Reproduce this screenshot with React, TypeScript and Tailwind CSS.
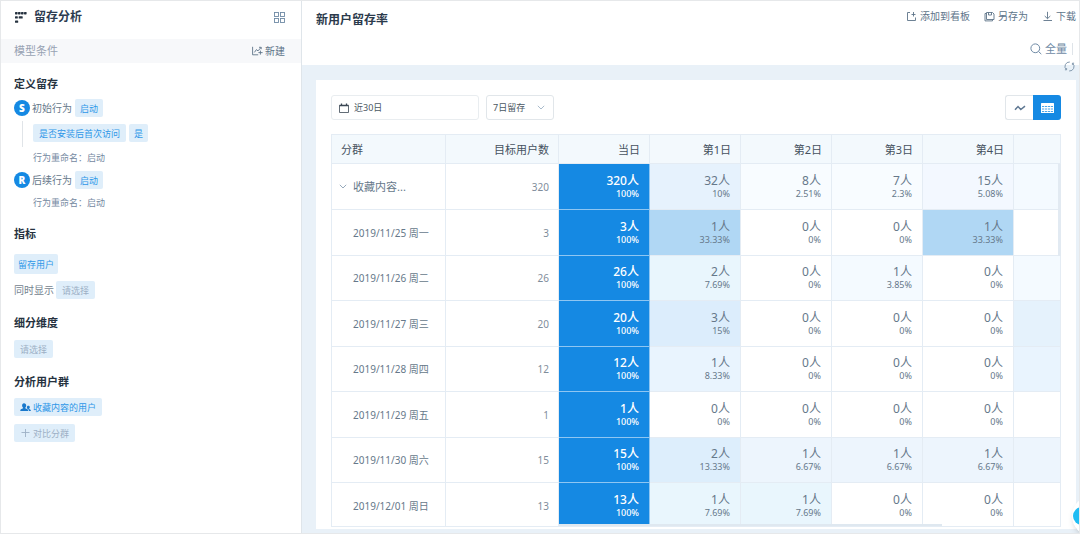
import { useState } from 'react'
import clsx from 'clsx'

const DAYS = ['第1日', '第2日', '第3日', '第4日']

interface Cell {
  n: number
  rate: string
  bg: string
}

interface Row {
  label: string
  total: number
  cells: Cell[]
  next: string
}

const ZERO: Cell = { n: 0, rate: '0%', bg: 'bg-white' }

const ROWS: Row[] = [
  {
    label: '收藏内容...',
    total: 320,
    cells: [
      { n: 32, rate: '10%', bg: 'bg-[#e6f2fd]' },
      { n: 8, rate: '2.51%', bg: 'bg-[#f8fcff]' },
      { n: 7, rate: '2.3%', bg: 'bg-[#f8fcff]' },
      { n: 15, rate: '5.08%', bg: 'bg-[#f3f8ff]' },
    ],
    next: 'bg-[#f4faff]',
  },
  {
    label: '2019/11/25 周一',
    total: 3,
    cells: [
      { n: 1, rate: '33.33%', bg: 'bg-[#b0d7f4]' },
      ZERO,
      ZERO,
      { n: 1, rate: '33.33%', bg: 'bg-[#b0d7f4]' },
    ],
    next: 'bg-white',
  },
  {
    label: '2019/11/26 周二',
    total: 26,
    cells: [
      { n: 2, rate: '7.69%', bg: 'bg-[#e9f6fd]' },
      ZERO,
      { n: 1, rate: '3.85%', bg: 'bg-[#f4faff]' },
      ZERO,
    ],
    next: 'bg-[#f4faff]',
  },
  {
    label: '2019/11/27 周三',
    total: 20,
    cells: [{ n: 3, rate: '15%', bg: 'bg-[#dcedfc]' }, ZERO, ZERO, ZERO],
    next: 'bg-[#e5f2fc]',
  },
  {
    label: '2019/11/28 周四',
    total: 12,
    cells: [{ n: 1, rate: '8.33%', bg: 'bg-[#e9f4fe]' }, ZERO, ZERO, ZERO],
    next: 'bg-[#e9f4fe]',
  },
  {
    label: '2019/11/29 周五',
    total: 1,
    cells: [ZERO, ZERO, ZERO, ZERO],
    next: 'bg-white',
  },
  {
    label: '2019/11/30 周六',
    total: 15,
    cells: [
      { n: 2, rate: '13.33%', bg: 'bg-[#ddeefc]' },
      { n: 1, rate: '6.67%', bg: 'bg-[#edf5fd]' },
      { n: 1, rate: '6.67%', bg: 'bg-[#edf5fd]' },
      { n: 1, rate: '6.67%', bg: 'bg-[#edf5fd]' },
    ],
    next: 'bg-[#edf5fd]',
  },
  {
    label: '2019/12/01 周日',
    total: 13,
    cells: [
      { n: 1, rate: '7.69%', bg: 'bg-[#e9f6fd]' },
      { n: 1, rate: '7.69%', bg: 'bg-[#e9f6fd]' },
      ZERO,
      ZERO,
    ],
    next: 'bg-white',
  },
]

interface ChipProps {
  children: React.ReactNode
  muted?: boolean
  className?: string
}

function Chip({ children, muted, className = 'h-[18px] px-[5px]' }: ChipProps) {
  return (
    <button
      type="button"
      className={clsx(
        'flex items-center rounded-xs bg-[#dfeefa] text-[9px] leading-none whitespace-nowrap',
        muted ? 'text-[#9db0c5]' : 'text-[#2e97e8]',
        className,
      )}
    >
      {children}
    </button>
  )
}

function Heading({ children, className }: { children: React.ReactNode; className?: string }) {
  return (
    <h2 className={clsx('text-[11px] leading-[18px] font-bold text-[#26323f]', className)}>
      {children}
    </h2>
  )
}

function Badge({ children }: { children: string }) {
  return (
    <span className="flex size-4 items-center justify-center rounded-full bg-[#1589e3] font-['Open_Sans',sans-serif] text-[10px] leading-none font-extrabold text-white">
      {children}
    </span>
  )
}

function Chevron({ className }: { className?: string }) {
  return (
    <svg viewBox="0 0 8 5" className={className} fill="none" stroke="currentColor" strokeWidth="0.9">
      <path d="M0.8 0.8 4 4l3.2-3.2" />
    </svg>
  )
}

function Sidebar() {
  return (
    <aside className="flex w-[301px] shrink-0 flex-col border-r border-[#dfe5ea] bg-white">
      <div className="flex h-[38px] items-center justify-between pr-4 pb-[6px] pl-[14px]">
        <div className="flex items-center gap-[7px]">
          <svg viewBox="0 0 12 11" className="h-[11px] w-3" fill="#26323f">
            <rect x="0" y="0" width="2.6" height="2.4" rx="0.6" />
            <rect x="3" y="0" width="2.6" height="2.4" rx="0.6" />
            <rect x="6" y="0" width="2.6" height="2.4" rx="0.6" />
            <rect x="9" y="0" width="2.6" height="2.4" rx="0.6" />
            <rect x="0" y="4.2" width="2.8" height="2.4" rx="0.6" />
            <rect x="3.7" y="4.2" width="4" height="2.4" rx="0.6" />
            <rect x="0" y="8.4" width="3.2" height="2.4" rx="0.6" />
          </svg>
          <h1 className="text-xs font-bold text-[#2c3b50]">留存分析</h1>
        </div>
        <button type="button" aria-label="切换视图" className="text-[#6f8aa5]">
          <svg viewBox="0 0 11 11" className="size-[11px]" fill="none" stroke="currentColor" strokeWidth="0.9">
            <rect x="0.5" y="0.5" width="4" height="4" />
            <rect x="6.5" y="0.5" width="4" height="4" />
            <rect x="0.5" y="6.5" width="4" height="4" />
            <rect x="6.5" y="6.5" width="4" height="4" />
          </svg>
        </button>
      </div>

      <div className="flex h-6 items-center justify-between bg-[#f7f8fa] pr-4 pl-[13px]">
        <span className="text-[11px] text-[#98a2b3]">模型条件</span>
        <button type="button" className="flex items-center gap-[2px] text-[10px] text-[#5d7489]">
          <svg viewBox="0 0 11 10" className="h-[10px] w-[11px]" fill="none" stroke="currentColor" strokeWidth="0.9">
            <path d="M0.6 0.8v8h5.6M2.4 6.4l2-2.8 1.6 1.3 3-3.4M7 1.3h2.2v1.9M8.4 4.6v4M6.4 6.6h4.2" />
          </svg>
          新建
        </button>
      </div>

      <div className="flex flex-col items-start px-[13px] pt-3">
        <Heading>定义留存</Heading>
        <div className="mt-[6px] flex items-center">
          <Badge>S</Badge>
          <span className="mr-[3px] ml-[2px] text-[10px] text-[#66788a]">初始行为</span>
          <Chip>启动</Chip>
        </div>
        <div className="flex gap-[10px] pl-2">
          <div className="mt-1 h-[26px] w-px bg-[#e0e4e8]" />
          <div>
            <div className="mt-[7px] flex gap-[3px]">
              <Chip className="h-[18px] px-[6px]">是否安装后首次访问</Chip>
              <Chip>是</Chip>
            </div>
            <p className="mt-[7px] text-[9px] leading-[18px] text-[#74889f]">行为重命名：启动</p>
          </div>
        </div>
        <div className="mt-1 flex items-center">
          <Badge>R</Badge>
          <span className="mr-[3px] ml-[2px] text-[10px] text-[#66788a]">后续行为</span>
          <Chip>启动</Chip>
        </div>
        <p className="mt-[5px] ml-[19px] text-[9px] leading-[18px] text-[#74889f]">行为重命名：启动</p>

        <Heading className="mt-[13px]">指标</Heading>
        <Chip className="mt-[11px] h-5 px-1">留存用户</Chip>
        <div className="mt-[7px] flex items-center gap-[2px]">
          <span className="text-[10px] text-[#74838f]">同时显示</span>
          <Chip muted className="h-[18px] px-[6px]">请选择</Chip>
        </div>

        <Heading className="mt-[15px]">细分维度</Heading>
        <Chip muted className="mt-2 h-[18px] px-[6px]">请选择</Chip>

        <Heading className="mt-[15px]">分析用户群</Heading>
        <Chip className="mt-[7px] h-[18px] gap-[2px] px-[6px]">
          <svg viewBox="0 0 11 9" className="h-[9px] w-[11px]" fill="#1878cc">
            <path d="M4 0.300c1.500 0 2.200 1 2.200 2.300 0 1-.4 1.800-.9 2.200v.5l2.100.9c.5.200.7.600.7 1.200V8H0.300v-.6c0-.6.200-1 .700-1.200l2.100-.9v-.5c-.6-.4-1-1.200-1-2.200C2.100 1.300 2.600.3 4 .3z" />
            <path d="M8.300 2.800c1 0 1.500.6 1.500 1.400 0 .6-.3 1-.6 1.300v.4l1 .5c.4.200.6.500.6 1V8H8.800c0-1-.2-1.600-1-2l-.6-.3c.2-.3-.3-.9-.3-1.500 0-.8.5-1.400 1.400-1.400z" />
          </svg>
          收藏内容的用户
        </Chip>
        <Chip muted className="mt-2 h-[18px] gap-[3px] px-[6px]">
          <svg viewBox="0 0 10 10" className="size-[10px]" fill="none" stroke="currentColor" strokeWidth="0.9">
            <path d="M5.500 1v8M1.500 4.500h8" />
          </svg>
          对比分群
        </Chip>
      </div>
    </aside>
  )
}

function PageHeader() {
  const action = 'flex items-center gap-[3px] whitespace-nowrap'
  return (
    <header className="relative h-16 bg-white pr-[3px] pl-[14px] text-[#5d7489]">
      <div className="flex justify-between">
        <h1 className="pt-[9px] text-xs leading-[20px] font-bold text-[#2b3a4b]">新用户留存率</h1>
        <div className="flex h-[30px] items-center gap-[14px] text-[10px]">
          <button type="button" className={action}>
            <svg viewBox="0 0 11 11" className="size-[11px]" fill="none" stroke="currentColor" strokeWidth="0.9">
              <path d="M4 1.500H1.500v8h8V6.500M7.500 1v4.500M5.500 3.500h4" />
            </svg>
            添加到看板
          </button>
          <button type="button" className={action}>
            <svg viewBox="0 0 11 11" className="size-[11px]" fill="none" stroke="currentColor" strokeWidth="0.9">
              <path d="M2.500 1.500h6l1.500 1.500v5.500H2.500zM4.500 1.500v2.500h3V1.500M2.500 2.500H1v7.400h7.500V8.500" />
            </svg>
            另存为
          </button>
          <button type="button" className={action}>
            <svg viewBox="0 0 11 11" className="size-[11px]" fill="none" stroke="currentColor" strokeWidth="0.9">
              <path d="M5.500 0.800v6.800M2.700 5l2.800 2.700L8.300 5M1.500 9.500h8.500" />
            </svg>
            下载
          </button>
        </div>
      </div>
      <div className="mt-[8px] flex h-5 items-center justify-end gap-[5px] pr-[3px]">
        <button type="button" className="flex items-center gap-[3px] text-[11px] text-[#6f8aa5]">
          <svg viewBox="0 0 12 12" className="size-3" fill="none" stroke="currentColor">
            <circle cx="5.300" cy="5.300" r="4.400" />
            <path d="M8.500 8.500l2.800 2.600" />
          </svg>
          全量
        </button>
        <span className="h-3 w-px bg-[#dfe4e9]" />
      </div>
      <button type="button" aria-label="刷新" className="absolute right-1 -bottom-[7px] text-[#8399ae]">
        <svg viewBox="0 0 11 11" className="size-[11px]" fill="none" stroke="currentColor">
          <path d="M5.800 1A4.500 4.500 0 0 0 2.300 8.700M5.200 10A4.500 4.500 0 0 0 8.700 2.300M0.900 8.800h1.700V7.100M10.100 2.200H8.400v1.700" />
        </svg>
      </button>
    </header>
  )
}

function Toolbar() {
  const [period, setPeriod] = useState('7')
  return (
    <div className="flex h-[25px] shrink-0 items-stretch">
      <label className="flex w-[148px] items-center gap-[5px] rounded-[3px] border border-[#e9edf0] pl-[7px]">
        <svg viewBox="0 0 10 10" className="size-[10px] shrink-0" fill="none" stroke="#3b4754" strokeWidth="0.8">
          <path d="M0.500 2.500h9v7h-9z" />
          <path d="M0.500 2.500h9M2.500 0.500v2M7.500 0.500v2" strokeWidth="1.300" />
        </svg>
        <input
          aria-label="日期范围"
          defaultValue="近30日"
          className="w-full min-w-0 bg-transparent text-[9px] text-[#4b5763] outline-none"
        />
      </label>
      <div className="relative ml-[7px] flex w-[68px]">
        <select
          aria-label="留存周期"
          value={period}
          onChange={(e) => setPeriod(e.target.value)}
          className="w-full appearance-none rounded-[3px] border border-[#e1e6ea] bg-white pl-[6px] text-[9px] text-[#4b5763] outline-none"
        >
          <option value="7">7日留存</option>
          <option value="14">14日留存</option>
        </select>
        <Chevron className="pointer-events-none absolute top-[10px] right-[9px] h-[5px] w-2 text-[#9fb3c6]" />
      </div>
      <div className="ml-auto flex">
        <button
          type="button"
          aria-label="折线图"
          className="flex w-7 items-center justify-center rounded-l-[3px] border border-r-0 border-[#e1e6ea] text-[#5f7893]"
        >
          <svg viewBox="0 0 12 8" className="h-2 w-3" fill="none" stroke="currentColor" strokeWidth="1.500">
            <path d="M1 5.800 4 2.600l2.800 3L11 2.200" />
          </svg>
        </button>
        <button
          type="button"
          aria-label="表格"
          className="flex w-7 items-center justify-center rounded-r-[3px] bg-[#1589e3]"
        >
          <svg viewBox="0 0 13 10" className="h-[10px] w-[13px]">
            <rect width="13" height="10" rx="0.5" fill="#fff" />
            <path
              d="M1 3.500h11M1 6h11M1 8.500h11"
              stroke="#4ba5ea"
              strokeDasharray="2.200 0.730"
              strokeWidth="1.200"
            />
          </svg>
        </button>
      </div>
    </div>
  )
}

function RetentionTable() {
  const line = 'border-r border-b border-[#e4ecf4]'
  const th = clsx(line, 'h-[29px] bg-[#f3f9fd] p-0 pr-[9px] text-right text-[11px] font-normal text-[#46525f]')
  return (
    <div className="relative mt-[14px] min-h-0 flex-1 overflow-hidden border border-r-0 border-[#e4ecf4]">
      <table className="w-full table-fixed border-separate border-spacing-0 leading-none">
        <colgroup>
          <col className="w-[114px]" />
          <col className="w-[113px]" />
          <col className="w-[91px]" />
          <col className="w-[91px]" />
          <col className="w-[91px]" />
          <col className="w-[91px]" />
          <col className="w-[91px]" />
          <col />
        </colgroup>
        <thead>
          <tr>
            <th className={clsx(line, 'h-[29px] bg-[#f3f9fd] p-0 pl-[9px] text-left text-[11px] font-normal text-[#46525f]')}>
              分群
            </th>
            <th className={th}>目标用户数</th>
            <th className={th}>当日</th>
            {DAYS.map((d) => (
              <th key={d} className={th}>{d}</th>
            ))}
            <th className={th} />
          </tr>
        </thead>
        <tbody className="text-[#66788a]">
          {ROWS.map((row, i) => (
            <tr key={row.label} className={i === 0 || i % 2 === 1 ? 'h-[46px]' : 'h-[45px]'}>
              <td className={clsx(line, 'p-0')}>
                {i === 0 ? (
                  <button type="button" className="flex items-center gap-[6px] pl-[7px] text-[11px]">
                    <Chevron className="h-[5px] w-2 text-[#8ba0b4]" />
                    {row.label}
                  </button>
                ) : (
                  <div className="pl-[21px] text-[10px] leading-[14px] whitespace-nowrap">{row.label}</div>
                )}
              </td>
              <td className={clsx(line, 'p-0 pr-[9px] text-right text-[10px] text-[#7f8d9b]')}>{row.total}</td>
              <td className="border-r border-b border-[#8fc6f2] bg-[#1589e3] p-0 pr-[10px] text-right text-white">
                <div className="text-xs leading-[14px] font-medium">{row.total}人</div>
                <div className="text-[9px] leading-[12px] font-medium">100%</div>
              </td>
              {row.cells.map((c, j) => (
                <td key={j} className={clsx(line, c.bg, 'p-0 pr-[10px] text-right')}>
                  <div className="text-xs leading-[14px]">{c.n}人</div>
                  <div className="text-[9px] leading-[12px]">{c.rate}</div>
                </td>
              ))}
              <td className={clsx(line, row.next, 'p-0')} />
            </tr>
          ))}
        </tbody>
      </table>
      {/* scroll thumbs */}
      <div className="absolute top-[29px] right-0 h-[92px] w-[3px] bg-[#e2eaf2]" />
      <div className="absolute right-[119px] bottom-0 left-[227px] h-[2px] bg-[#dfe8f0]" />
    </div>
  )
}

export default function App() {
  return (
    <div className="relative flex h-screen overflow-hidden border border-[#e6e8ea] bg-[#e9f1f8] font-['Noto_Sans','Noto_Sans_CJK_SC',sans-serif]">
      <Sidebar />
      <div className="flex min-w-0 flex-1 flex-col">
        <PageHeader />
        <main className="mt-[15px] mr-[3px] mb-1 ml-[14px] flex min-h-0 flex-1 flex-col bg-white pt-[15px] pr-[15px] pb-[2px] pl-[15px]">
          <Toolbar />
          <RetentionTable />
        </main>
      </div>
      <button
        type="button"
        aria-label="在线客服"
        className="absolute -right-[33px] -bottom-[3px] flex size-10 items-center rounded-full bg-white pl-px shadow-md"
      >
        <span className="size-[18px] rounded-full bg-[#1fbcf3]" />
      </button>
    </div>
  )
}
